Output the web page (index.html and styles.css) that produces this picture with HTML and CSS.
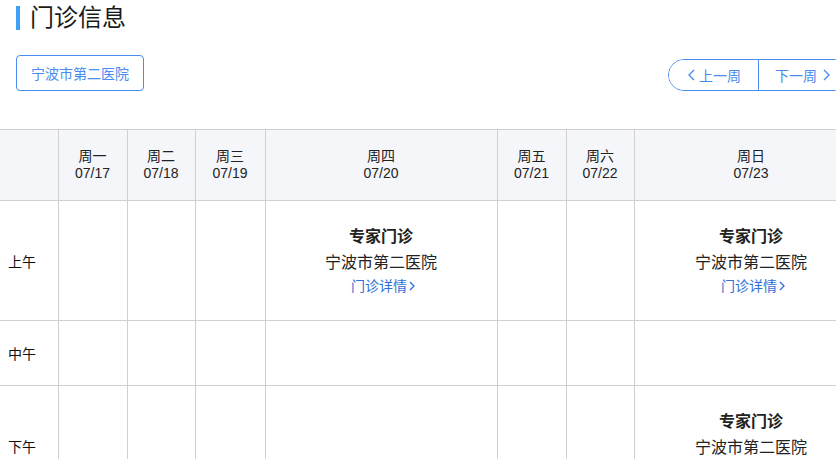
FILE: index.html
```html
<!DOCTYPE html>
<html lang="zh-CN">
<head>
<meta charset="utf-8">
<title>门诊信息</title>
<link rel="stylesheet" href="styles.css">
</head>
<body>
<div class="page">
  <h1 class="title">门诊信息</h1>
  <div class="toolbar">
    <button class="hospital-btn">宁波市第二医院</button>
    <div class="pager">
      <button class="pager-btn prev"><svg class="chev" width="7" height="12" viewBox="0 0 7 12"><polyline points="6,1 1,6 6,11" fill="none" stroke="currentColor" stroke-width="1.4"/></svg>上一周</button>
      <button class="pager-btn next">下一周<svg class="chev" width="7" height="12" viewBox="0 0 7 12"><polyline points="1,1 6,6 1,11" fill="none" stroke="currentColor" stroke-width="1.4"/></svg></button>
    </div>
  </div>
  <table class="schedule">
    <colgroup>
      <col class="c-label"><col class="c-a"><col class="c-b"><col class="c-c"><col class="c-wide"><col class="c-a"><col class="c-b"><col class="c-wide2">
    </colgroup>
    <thead>
      <tr>
        <th></th>
        <th>周一<br>07/17</th>
        <th>周二<br>07/18</th>
        <th>周三<br>07/19</th>
        <th>周四<br>07/20</th>
        <th>周五<br>07/21</th>
        <th>周六<br>07/22</th>
        <th>周日<br>07/23</th>
      </tr>
    </thead>
    <tbody>
      <tr class="row-full">
        <td class="label">上午</td>
        <td></td><td></td><td></td>
        <td><div class="slot"><div class="slot-type">专家门诊</div><div class="slot-hosp">宁波市第二医院</div><a class="slot-link" href="#">门诊详情<svg class="link-chev" width="6" height="10" viewBox="0 0 6 10"><polyline points="1,1 5,5 1,9" fill="none" stroke="currentColor" stroke-width="1.3"/></svg></a></div></td>
        <td></td><td></td>
        <td><div class="slot"><div class="slot-type">专家门诊</div><div class="slot-hosp">宁波市第二医院</div><a class="slot-link" href="#">门诊详情<svg class="link-chev" width="6" height="10" viewBox="0 0 6 10"><polyline points="1,1 5,5 1,9" fill="none" stroke="currentColor" stroke-width="1.3"/></svg></a></div></td>
      </tr>
      <tr class="row-empty">
        <td class="label">中午</td>
        <td></td><td></td><td></td><td></td><td></td><td></td><td></td>
      </tr>
      <tr class="row-full">
        <td class="label">下午</td>
        <td></td><td></td><td></td><td></td><td></td><td></td>
        <td><div class="slot"><div class="slot-type">专家门诊</div><div class="slot-hosp">宁波市第二医院</div><a class="slot-link" href="#">门诊详情<svg class="link-chev" width="6" height="10" viewBox="0 0 6 10"><polyline points="1,1 5,5 1,9" fill="none" stroke="currentColor" stroke-width="1.3"/></svg></a></div></td>
      </tr>
    </tbody>
  </table>
</div>
</body>
</html>
```
FILE: styles.css
```css
html, body {
  margin: 0;
  padding: 0;
  overflow: hidden;
  background: #fff;
}
body {
  font-family: "Liberation Sans", "Noto Sans CJK SC", sans-serif;
  color: #222;
}
.page {
  width: 868px;
}
.title {
  margin: 0;
  padding: 2px 0 0 16px;
  font-size: 24px;
  font-weight: normal;
  line-height: 32px;
  display: flex;
  align-items: center;
  color: #1a1a1a;
}
.title::before {
  content: "";
  display: block;
  width: 4px;
  height: 24px;
  background: #3fa0f5;
  margin-right: 10px;
}
.toolbar {
  display: flex;
  justify-content: space-between;
  align-items: flex-start;
  padding: 0 18px 0 16px;
  margin-top: 21px;
}
.hospital-btn {
  font-family: inherit;
  font-size: 14px;
  color: #4a8cf0;
  background: #fff;
  border: 1px solid #4a8cf0;
  border-radius: 4px;
  height: 36px;
  width: 128px;
  padding: 0;
  cursor: pointer;
}
.pager {
  display: flex;
  margin-top: 4px;
  border: 1px solid #4a8cf0;
  border-radius: 16px;
  height: 30px;
  overflow: hidden;
}
.pager-btn {
  font-family: inherit;
  font-size: 14px;
  color: #4a8cf0;
  background: #fff;
  border: 0;
  height: 30px;
  width: 90px;
  display: flex;
  align-items: center;
  justify-content: center;
  gap: 4px;
  padding: 0;
  cursor: pointer;
}
.pager-btn.prev {
  padding-left: 2px;
  border-right: 1px solid #4a8cf0;
}
.pager-btn.next {
  justify-content: flex-start;
  padding-left: 16px;
  gap: 6px;
}
.chev {
  display: block;
}
.schedule {
  margin-top: 38px;
  border-collapse: collapse;
  table-layout: fixed;
  width: 868px;
  font-size: 14px;
}
.c-label { width: 58px; }
.c-a { width: 69px; }
.c-b { width: 68px; }
.c-c { width: 70px; }
.c-wide { width: 232px; }
.c-wide2 { width: 234px; }
.schedule th,
.schedule td {
  border: 1px solid #d0d0d0;
  padding: 0;
  text-align: center;
  vertical-align: middle;
}
.schedule tr > :first-child {
  border-left: 0;
}
.schedule thead th {
  background: #f5f6fa;
  font-weight: normal;
  line-height: 17px;
  height: 70px;
  color: #222;
}
.row-full td { height: 119px; }
.row-empty td { height: 64px; }
.schedule td.label {
  text-align: left;
  padding-left: 8px;
  color: #111;
}
.slot {
  display: flex;
  flex-direction: column;
  align-items: center;
}
.slot-type {
  font-size: 16px;
  font-weight: bold;
  line-height: 24px;
  color: #222;
}
.slot-hosp {
  font-size: 16px;
  line-height: 24px;
  margin-top: 2px;
  color: #222;
}
.slot-link {
  font-size: 14px;
  line-height: 20px;
  margin-top: 1px;
  margin-left: 4px;
  color: #2f6fd8;
  text-decoration: none;
  display: flex;
  align-items: center;
  gap: 2px;
}
.link-chev { display: block; }
```
